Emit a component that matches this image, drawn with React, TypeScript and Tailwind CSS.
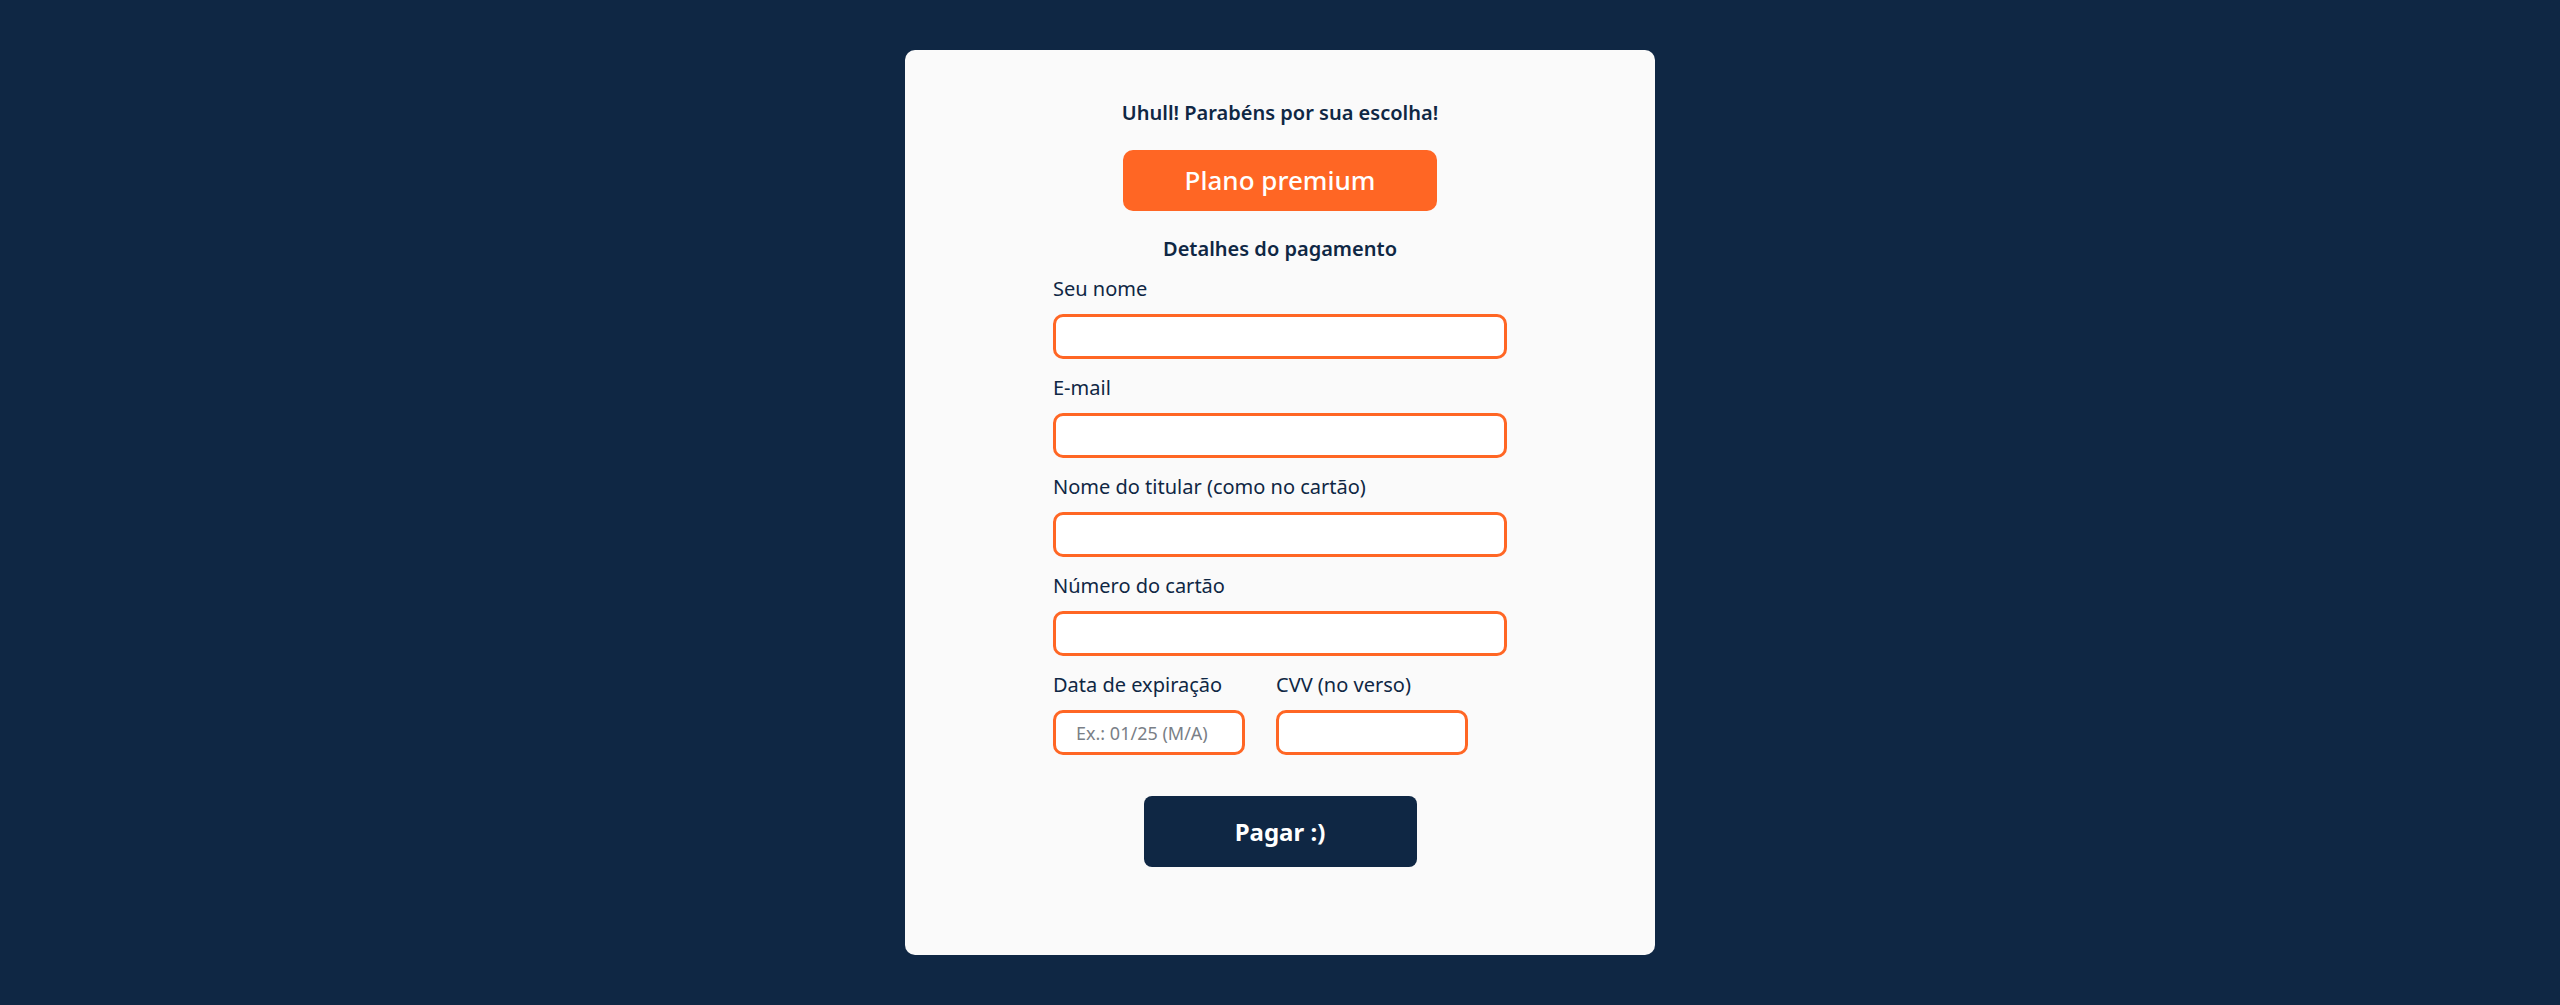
import React from 'react';

const font = { fontFamily: '"Noto Sans", "Open Sans", sans-serif' };

function Field({ label, className, placeholder, first }: { label: string; className?: string; placeholder?: string; first?: boolean }) {
  return (
    <div className={`flex flex-col ${className ?? ''}`}>
      <label className={`${first ? 'mt-[13px]' : 'mt-[16px]'} text-[20px] leading-[26px] text-[#0f2744]`}>{label}</label>
      <input
        type="text"
        placeholder={placeholder}
        className="mt-[12px] h-[45px] w-full rounded-[10px] border-[3px] border-[#ff6624] bg-white px-[20px] text-[18px] text-[#0f2744] outline-none placeholder:text-[#7a7f87]"
      />
    </div>
  );
}

export default function App() {
  return (
    <div className="min-h-[1005px] w-full bg-[#0f2744] pt-[50px]" style={font}>
      <div className="mx-auto flex h-[905px] w-[750px] flex-col items-center rounded-[10px] bg-[#fafafa] pt-[49px]">
        <h1 className="text-[20px] font-semibold leading-[28px] text-[#0f2744]">Uhull! Parabéns por sua escolha!</h1>
        <div className="mt-[23px] flex h-[61px] w-[314px] items-center justify-center rounded-[10px] bg-[#ff6624] text-[26px] font-medium text-white">
          Plano premium
        </div>
        <h2 className="mt-[24px] text-[20px] font-semibold leading-[28px] text-[#0f2744]">Detalhes do pagamento</h2>

        <form className="flex w-[454px] flex-col" onSubmit={(e) => e.preventDefault()}>
          <Field label="Seu nome" first />
          <Field label="E-mail" />
          <Field label="Nome do titular (como no cartão)" />
          <Field label="Número do cartão" />
          <div className="flex gap-[31px]">
            <Field label="Data de expiração" className="w-[192px]" placeholder="Ex.: 01/25 (M/A)" />
            <Field label="CVV (no verso)" className="w-[192px]" />
          </div>
          <button
            type="submit"
            className="mx-auto mt-[41px] h-[71px] w-[273px] rounded-[8px] bg-[#0f2744] text-[24px] font-bold text-white"
          >
            Pagar :)
          </button>
        </form>
      </div>
    </div>
  );
}
